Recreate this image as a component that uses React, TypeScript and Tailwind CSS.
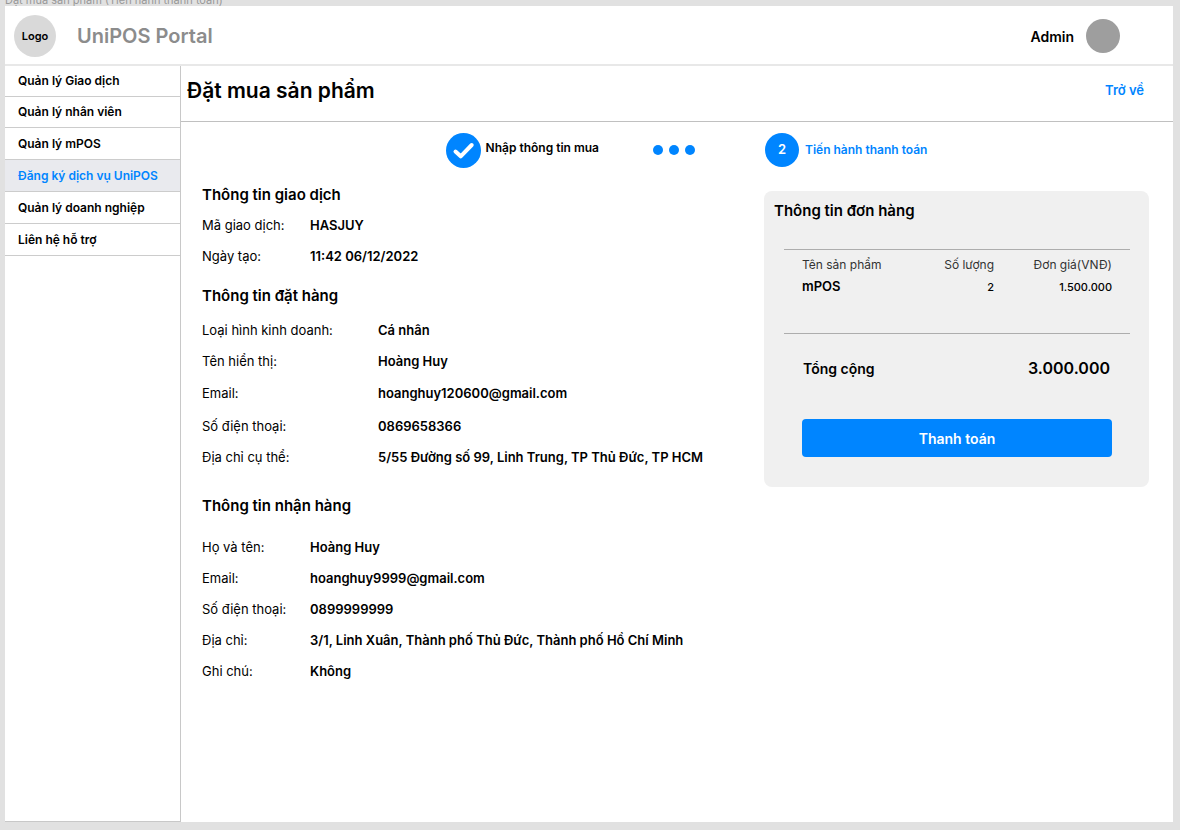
type Field = { label: string; value: string; tall?: boolean };

const menu = [
  { text: "Quản lý Giao dịch" },
  { text: "Quản lý nhân viên" },
  { text: "Quản lý mPOS" },
  { text: "Đăng ký dịch vụ UniPOS", active: true },
  { text: "Quản lý doanh nghiệp" },
  { text: "Liên hệ hỗ trợ" },
];

const transaction: Field[] = [
  { label: "Mã giao dịch:", value: "HASJUY" },
  { label: "Ngày tạo:", value: "11:42 06/12/2022" },
];

const order: Field[] = [
  { label: "Loại hình kinh doanh:", value: "Cá nhân" },
  { label: "Tên hiển thị:", value: "Hoàng Huy" },
  { label: "Email:", value: "hoanghuy120600@gmail.com", tall: true },
  { label: "Số điện thoại:", value: "0869658366" },
  { label: "Địa chỉ cụ thể:", value: "5/55 Đường số 99, Linh Trung, TP Thủ Đức, TP HCM" },
];

const delivery: Field[] = [
  { label: "Họ và tên:", value: "Hoàng Huy" },
  { label: "Email:", value: "hoanghuy9999@gmail.com" },
  { label: "Số điện thoại:", value: "0899999999" },
  { label: "Địa chỉ:", value: "3/1, Linh Xuân, Thành phố Thủ Đức, Thành phố Hồ Chí Minh" },
  { label: "Ghi chú:", value: "Không" },
];

function Fields({ items, wide = false }: { items: Field[]; wide?: boolean }) {
  return (
    <dl className="text-[13px]">
      {items.map((f) => (
        <div key={f.label} className={f.tall ? "flex h-[34px] items-center" : "flex h-[31px] items-center"}>
          <dt className={wide ? "w-[176px] shrink-0" : "w-[108px] shrink-0"}>{f.label}</dt>
          <dd className="font-semibold whitespace-nowrap">{f.value}</dd>
        </div>
      ))}
    </dl>
  );
}

function Heading({ children }: { children: string }) {
  return <h2 className="text-[15px] leading-6 font-semibold">{children}</h2>;
}

export default function App() {
  return (
    <div className="flex min-h-screen flex-col bg-[#e1e1e1] pr-[7px] pb-2 pl-[5px] font-['Inter','Noto_Sans',sans-serif] text-black">
      <div className="flex h-[6px] items-end overflow-hidden text-[11px] leading-3 text-[#999999]">
        <span>Đặt mua sản phẩm (Tiến hành thanh toán)</span>
      </div>
      <div className="flex flex-1 flex-col bg-white">
        <header className="flex h-[60px] items-center border-b-2 border-[#e8e8e8] pt-[2px] pr-[53px] pl-[9px]">
          <div className="flex size-[42px] items-center justify-center rounded-full bg-[#d9d9d9] text-[11px] font-semibold">
            Logo
          </div>
          <div className="ml-[21px] text-[20px] font-semibold text-[#8c8c8c]">UniPOS Portal</div>
          <div className="ml-auto text-[14px] font-semibold">Admin</div>
          <div className="ml-3 size-[34px] rounded-full bg-[#9e9e9e]" />
        </header>

        <div className="flex flex-1">
          <nav className="w-[176px] shrink-0 border-r border-b border-[#c8c8c8]">
            <ul className="text-[12px] font-semibold">
              {menu.map((m) => (
                <li key={m.text} className="h-[32px] border-b border-[#cccccc] first:h-[31px] nth-2:h-[31px]">
                  <a
                    href="#"
                    className={
                      m.active
                        ? "flex h-full items-center bg-[#e9eaee] pl-[13px] text-[#0085ff]"
                        : "flex h-full items-center pl-[13px]"
                    }
                  >
                    {m.text}
                  </a>
                </li>
              ))}
            </ul>
          </nav>

          <main className="flex-1">
            <div className="flex h-[56px] items-center justify-between border-b border-[#c0c0c0] pr-[29px] pb-[6px] pl-[6px]">
              <h1 className="text-[21px] font-semibold">Đặt mua sản phẩm</h1>
              <a href="#" className="text-[13px] font-semibold text-[#0085ff]">
                Trở về
              </a>
            </div>

            <div className="grid grid-cols-[1fr_385px] pr-6 pl-[21px]">
              <div className="flex h-14 items-center justify-end pr-[69px] text-[12px] font-semibold">
                <div className="flex items-center gap-[5px]">
                  <svg className="size-[35px]" viewBox="0 0 35 35" fill="none" aria-hidden="true">
                    <circle cx="17.5" cy="17.5" r="17.5" fill="#0085ff" />
                    <path d="M9.5 18.5 L14.7 23.3 L25.7 12" stroke="white" strokeWidth="4" strokeLinecap="round" strokeLinejoin="round" />
                  </svg>
                  <span className="pb-1">Nhập thông tin mua</span>
                </div>
                <div className="ml-[54px] flex gap-[6px]">
                  <span className="size-[10px] rounded-full bg-[#0085ff]" />
                  <span className="size-[10px] rounded-full bg-[#0085ff]" />
                  <span className="size-[10px] rounded-full bg-[#0085ff]" />
                </div>
              </div>
              <div className="flex h-14 items-center gap-[6px] pl-px text-[12px] font-semibold text-[#0085ff]">
                <span className="flex size-[34px] items-center justify-center rounded-full bg-[#0085ff] text-[13px] text-white">
                  2
                </span>
                <span>Tiến hành thanh toán</span>
              </div>

              <div className="pt-[5px]">
                <section>
                  <Heading>Thông tin giao dịch</Heading>
                  <div className="pt-[3px]">
                    <Fields items={transaction} />
                  </div>
                </section>
                <section className="pt-3">
                  <Heading>Thông tin đặt hàng</Heading>
                  <div className="pt-[7px]">
                    <Fields items={order} wide />
                  </div>
                </section>
                <section className="pt-[21px]">
                  <Heading>Thông tin nhận hàng</Heading>
                  <div className="pt-[14px]">
                    <Fields items={delivery} />
                  </div>
                </section>
              </div>

              <aside className="mt-[13px] self-start rounded-lg bg-[#f0f0f0] pt-2 pb-[30px]">
                <div className="pl-[10px]">
                  <Heading>Thông tin đơn hàng</Heading>
                </div>
                <div className="mr-[19px] ml-5 mt-[26px] h-[85px] border-y border-[#adadad] px-[18px] pt-1">
                  <table className="w-full text-[12px]">
                    <thead>
                      <tr className="h-[22px] text-[#333333]">
                        <th className="text-left font-normal">Tên sản phẩm</th>
                        <th className="text-right font-normal">Số lượng</th>
                        <th className="w-[118px] text-right font-normal">Đơn giá(VNĐ)</th>
                      </tr>
                    </thead>
                    <tbody>
                      <tr className="h-[22px] text-[11px]">
                        <td className="text-[13px] font-semibold">mPOS</td>
                        <td className="text-right font-medium">2</td>
                        <td className="text-right font-medium">1.500.000</td>
                      </tr>
                    </tbody>
                  </table>
                </div>
                <div className="mx-[39px] mt-[22px] flex h-6 items-center justify-between font-semibold">
                  <span className="text-[14px]">Tổng cộng</span>
                  <span className="text-[16px]">3.000.000</span>
                </div>
                <div className="mt-[39px] pr-[37px] pl-[38px]">
                  <button type="button" className="h-[38px] w-full rounded bg-[#0085ff] text-[14px] font-semibold text-white">
                    Thanh toán
                  </button>
                </div>
              </aside>
            </div>
          </main>
        </div>
      </div>
    </div>
  );
}
